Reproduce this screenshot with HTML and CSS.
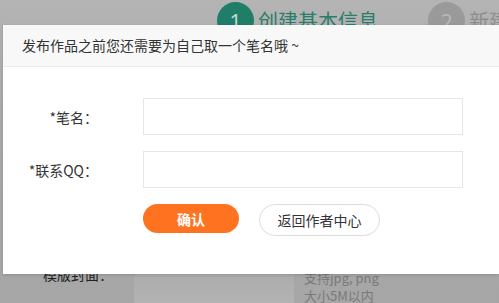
FILE: index.html
```html
<!DOCTYPE html>
<html lang="zh-CN">
<head>
<meta charset="utf-8">
<link rel="stylesheet" href="styles.css">
</head>
<body>
<div class="page">
  <div class="steps">
    <div class="step step-active"><span class="num">1</span><span class="step-text">创建基本信息</span></div>
    <div class="step step-next"><span class="num">2</span><span class="step-text">新建</span></div>
  </div>
  <div class="bg-row">
    <div class="bg-label">*模版封面：</div>
    <div class="bg-upload"></div>
    <div class="bg-tip"><div>支持jpg, png</div><div>大小5M以内</div></div>
  </div>
</div>
<div class="modal">
  <div class="modal-head">发布作品之前您还需要为自己取一个笔名哦 ~</div>
  <div class="modal-body">
    <div class="row">
      <label class="label">*笔名：</label>
      <div class="input"></div>
    </div>
    <div class="row">
      <label class="label">*联系QQ：</label>
      <div class="input"></div>
    </div>
    <div class="actions">
      <button class="btn btn-primary">确认</button>
      <button class="btn btn-ghost">返回作者中心</button>
    </div>
  </div>
</div>
</body>
</html>
```
FILE: styles.css
```css
html, body {
  margin: 0;
  padding: 0;
}
body {
  width: 499px;
  height: 303px;
  overflow: hidden;
  position: relative;
  background: linear-gradient(#b4b4b4, #a9a9a9 40%, #a6a6a6);
  font-family: "Noto Sans CJK SC", "Microsoft YaHei", sans-serif;
}
.page {
  height: 303px;
  display: flex;
  flex-direction: column;
  justify-content: space-between;
  overflow: hidden;
}
.steps {
  display: flex;
  padding-left: 217px;
  padding-top: 2px;
  gap: 50px;
  white-space: nowrap;
  overflow: hidden;
}
.step {
  display: flex;
  align-items: flex-start;
  gap: 4px;
  flex-shrink: 0;
}
.num {
  flex-shrink: 0;
  width: 37px;
  height: 37px;
  border-radius: 50%;
  display: flex;
  align-items: center;
  justify-content: center;
  font-family: "Open Sans", sans-serif;
  font-size: 22px;
  color: #c8d8d4;
}
.step-active .num { background: #1f7d68; }
.step-active .step-text { color: #2a7d6b; }
.step-next .num { background: #9a9a9a; color: #b8b8b8; }
.step-next .step-text { color: #8c8c8c; }
.step-text {
  font-size: 20px;
  line-height: 30px;
  padding-top: 4px;
}
.bg-row {
  display: flex;
  align-items: flex-start;
  height: 40px;
}
.bg-label {
  width: 113px;
  text-align: right;
  font-size: 14px;
  line-height: 20px;
  color: #222;
  padding-top: 1px;
  margin-right: 21px;
  white-space: nowrap;
}
.bg-upload {
  width: 160px;
  height: 40px;
  background: linear-gradient(#a9a9a9, #b3b3b3);
  margin-right: 10px;
}
.bg-tip {
  font-size: 13px;
  line-height: 18px;
  color: #7a7a7a;
  padding-top: 6px;
  white-space: nowrap;
}
.modal {
  position: absolute;
  left: 3px;
  top: 25px;
  width: 496px;
  height: 249px;
  background: #fff;
  box-shadow: 0 1px 3px rgba(0,0,0,0.15);
}
.modal-head {
  height: 41px;
  background: #f8f8f8;
  border-bottom: 1px solid #ececec;
  padding-left: 19px;
  font-size: 14px;
  line-height: 41px;
  color: #333;
}
.modal-body {
  padding-top: 31px;
  display: flex;
  flex-direction: column;
  gap: 16px;
}
.row {
  display: flex;
  align-items: center;
}
.label {
  width: 95px;
  margin-right: 45px;
  text-align: right;
  font-size: 14px;
  color: #333;
  white-space: nowrap;
}
.input {
  width: 318px;
  height: 35px;
  border: 1px solid #e6e6e6;
  background: #fff;
}
.actions {
  display: flex;
  align-items: flex-start;
  gap: 20px;
  padding-left: 140px;
}
.btn {
  font-family: "Noto Sans CJK SC", "Microsoft YaHei", sans-serif;
  font-size: 14px;
  border-radius: 16px;
  padding: 0;
  margin: 0;
  cursor: pointer;
}
.btn-primary {
  width: 96px;
  height: 29px;
  background: #ff7320;
  border: none;
  color: #fff;
  font-weight: bold;
}
.btn-ghost {
  width: 121px;
  height: 32px;
  background: #fff;
  border: 1px solid #dcdcdc;
  color: #333;
}
```
